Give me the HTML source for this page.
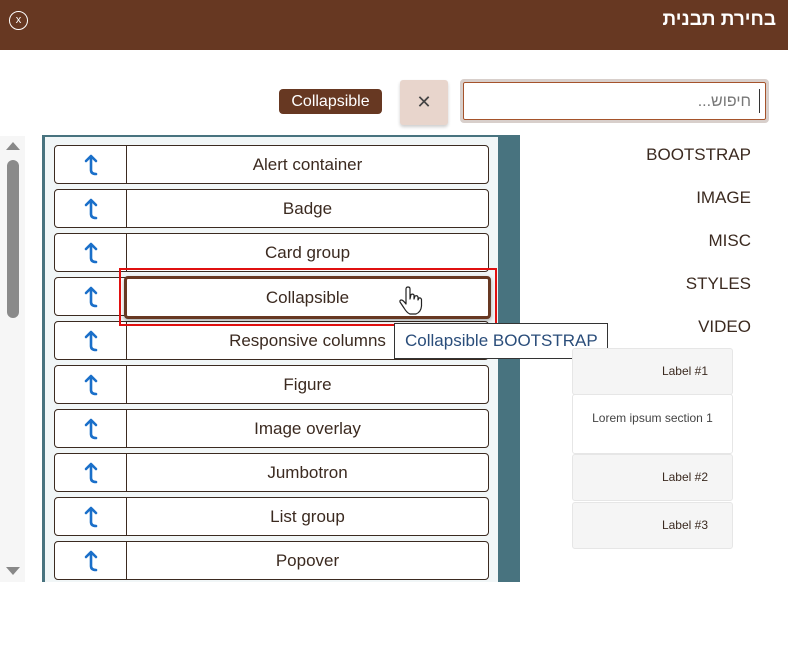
<!DOCTYPE html>
<html><head><meta charset="utf-8"><style>
*{box-sizing:border-box;margin:0;padding:0}
body{width:788px;height:650px;background:#fff;font-family:"Liberation Sans",sans-serif;position:relative;overflow:hidden;color:#3b2a20}
.hdr{position:absolute;left:0;top:0;width:788px;height:50px;background:#673822}
.hdr .t{position:absolute;right:12px;top:9px;color:#fff;font-size:19px;font-weight:bold;font-family:"Liberation Sans","Noto Sans CJK SC",sans-serif;direction:rtl}
.hdr .c{position:absolute;left:9px;top:11px;width:19px;height:19px;border:1.5px solid #fff;border-radius:50%;color:#fff;font-size:11px;text-align:center;line-height:16px}
.inp{position:absolute;left:460px;top:79px;width:309px;height:44px;border:3px solid #d8cfcb;border-radius:4px}
.inp div{position:absolute;inset:0;border:1.5px solid #a5532b;border-radius:2px;font-size:16px;color:#777;text-align:right;padding:10px 14px 0 0;font-family:"Liberation Sans","Noto Sans CJK SC",sans-serif;direction:rtl}
.inp span{position:absolute;right:6px;top:7px;width:1px;height:24px;background:#333}
.xb{position:absolute;left:400px;top:80px;width:48px;height:45px;background:#e8d5cc;border-radius:3px;box-shadow:0 2px 3px rgba(0,0,0,.2);text-align:center;line-height:45px;font-size:18px;color:#444}
.bd{position:absolute;left:279px;top:89px;width:103px;height:25px;background:#673822;border-radius:4px;color:#fff;font-size:16px;text-align:center;line-height:25px}
.sb{position:absolute;left:0;top:136px;width:25px;height:446px;background:#f6f6f6}
.sb .th{position:absolute;left:7px;top:24px;width:12px;height:158px;background:#8a8a8a;border-radius:6px}
.tri{position:absolute;left:6px;width:0;height:0;border-left:7px solid transparent;border-right:7px solid transparent}
.list{position:absolute;left:42px;top:135px;width:478px;height:447px;background:#f1f6f7;border-left:3px solid #48737f;border-top:2px solid #48737f}
.strip{position:absolute;left:498px;top:135px;width:22px;height:447px;background:#48737f}
.row{position:absolute;left:54px;width:435px;height:39px;background:#fff;border:1px solid #3b2a20;border-radius:4px}
.row .ic{position:absolute;left:0;top:0;width:72px;height:100%;border-right:1px solid #3b2a20}
.row .ic svg{position:absolute;left:29px;top:8px}
.row .lb{position:absolute;left:72px;right:0;top:0;text-align:center;font-size:17px;line-height:37px}
.cat{position:absolute;right:37px;font-size:17px}
.acc{position:absolute;left:572px;width:161px;border:1px solid #e6e6e6;border-radius:3px;background:#f5f5f5;font-size:12px;text-align:right;padding-right:24px}
</style></head><body>
<svg width="0" height="0" style="position:absolute"><defs><symbol id="ar" viewBox="0 0 14 22"><path d="M7 2V16Q7 20 12 20M2 7L7 2L12 7" fill="none" stroke="#1a6fc9" stroke-width="2.6" stroke-linecap="round" stroke-linejoin="round"/></symbol></defs></svg>
<div class="hdr"><div class="c">x</div><div class="t">בחירת תבנית</div></div>
<div class="inp"><div>חיפוש...</div><span></span></div>
<div class="xb">✕</div>
<div class="bd">Collapsible</div>
<div class="sb"><div class="tri" style="top:6px;border-bottom:8px solid #888"></div><div class="th"></div><div class="tri" style="top:431px;border-top:8px solid #888"></div></div>
<div class="list"></div><div class="strip"></div>
<div class="row" style="top:145px"><div class="ic"><svg width="14" height="22"><use href="#ar"/></svg></div><div class="lb">Alert container</div></div>
<div class="row" style="top:189px"><div class="ic"><svg width="14" height="22"><use href="#ar"/></svg></div><div class="lb">Badge</div></div>
<div class="row" style="top:233px"><div class="ic"><svg width="14" height="22"><use href="#ar"/></svg></div><div class="lb">Card group</div></div>
<div class="row" style="top:277px"><div class="ic"><svg width="14" height="22"><use href="#ar"/></svg></div><div class="lb">Collapsible</div></div>
<div class="row" style="top:321px"><div class="ic"><svg width="14" height="22"><use href="#ar"/></svg></div><div class="lb">Responsive columns</div></div>
<div class="row" style="top:365px"><div class="ic"><svg width="14" height="22"><use href="#ar"/></svg></div><div class="lb">Figure</div></div>
<div class="row" style="top:409px"><div class="ic"><svg width="14" height="22"><use href="#ar"/></svg></div><div class="lb">Image overlay</div></div>
<div class="row" style="top:453px"><div class="ic"><svg width="14" height="22"><use href="#ar"/></svg></div><div class="lb">Jumbotron</div></div>
<div class="row" style="top:497px"><div class="ic"><svg width="14" height="22"><use href="#ar"/></svg></div><div class="lb">List group</div></div>
<div class="row" style="top:541px"><div class="ic"><svg width="14" height="22"><use href="#ar"/></svg></div><div class="lb">Popover</div></div>
<div style="position:absolute;left:124px;top:276px;width:367px;height:43px;border:3px solid #673822;border-radius:4px;background:#fff;text-align:center;font-size:17px;line-height:37px;box-shadow:0 2px 4px rgba(0,0,0,.3)">Collapsible</div>
<div style="position:absolute;left:119px;top:268px;width:378px;height:58px;border:2px solid #e01010"></div>
<svg style="position:absolute;left:398px;top:286px" width="26" height="30" viewBox="0 0 26 30"><path d="M8 3Q8 1 10 1Q12 1 12 3V13L13 8.5Q15 7.5 16 9V13L17 10Q19 9 20 11V14L21 12Q23 11.5 23.5 13.5V20Q23 26 18 28H12Q9 27 6 22L2 16Q1.5 14 3.5 14Q5 14 8 18Z" fill="#fff" stroke="#222" stroke-width="1.2" stroke-linejoin="round"/></svg>
<div style="position:absolute;left:394px;top:323px;width:214px;height:36px;border:1px solid #333;background:#fff;color:#2a4d7a;font-size:17px;line-height:34px;padding-left:10px">Collapsible BOOTSTRAP</div>
<div class="cat" style="top:145px">BOOTSTRAP</div>
<div class="cat" style="top:188px">IMAGE</div>
<div class="cat" style="top:231px">MISC</div>
<div class="cat" style="top:274px">STYLES</div>
<div class="cat" style="top:317px">VIDEO</div>
<div class="acc" style="top:348px;height:47px;line-height:44px">Label #1</div>
<div class="acc" style="top:394px;height:60px;background:#fff;padding:0;text-align:center;line-height:46px;color:#444">Lorem ipsum section 1</div>
<div class="acc" style="top:454px;height:47px;line-height:45px">Label #2</div>
<div class="acc" style="top:502px;height:47px;line-height:45px">Label #3</div>
</body></html>
